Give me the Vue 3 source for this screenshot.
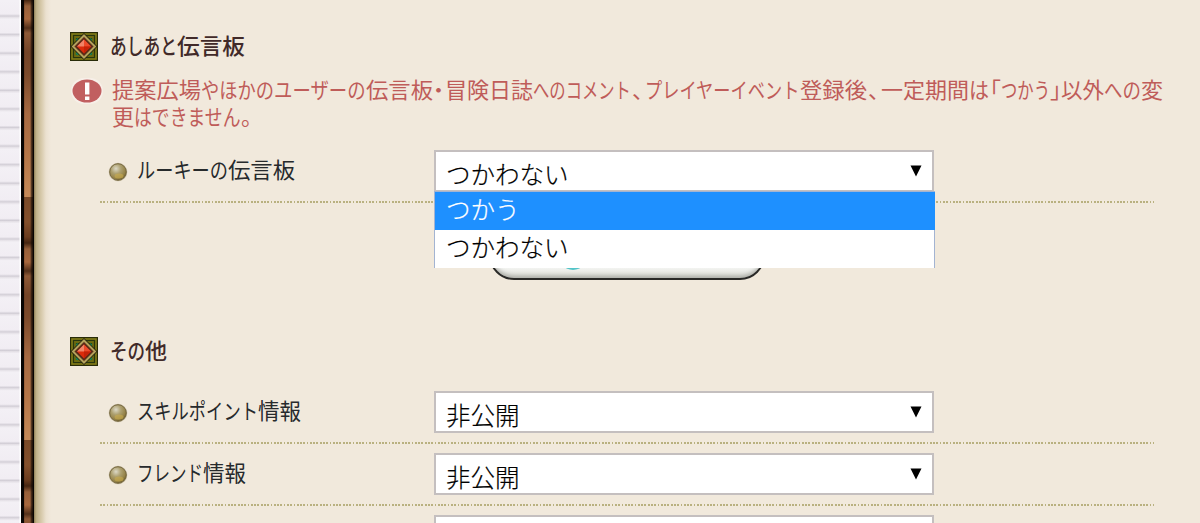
<template>
  <div class="page">
    <div class="paper"></div>
    <div class="frame"><div class="wood"></div></div>
    <main class="content">
      <section v-for="section in sections" :key="section.id" :class="['section', section.id]">
        <h2 class="heading">
          <svg class="gem" width="28" height="29" viewBox="0 0 28 29">
            <rect width="28" height="29" fill="#282b08" />
            <rect x="2" y="2" width="24" height="25" fill="#29350e" stroke="#857f18" stroke-width="1.6" />
            <path d="M5 12V5h7M16 5h7v7M23 17v7h-7M12 24H5v-7" fill="none" stroke="#6c6a10" stroke-width="1.8" />
            <g fill="#168454">
              <circle cx="7.5" cy="8" r="1.7" /><circle cx="20.5" cy="8" r="1.7" />
              <circle cx="7.5" cy="21.5" r="1.7" /><circle cx="20.5" cy="21.5" r="1.7" />
            </g>
            <path d="M14 3.5 25 14.5 14 25.5 3 14.5z" fill="#49301a" stroke="#201c0b" stroke-width="3.5" />
            <path d="M14 3.5 25 14.5 14 25.5 3 14.5z" fill="#5b2a17" stroke="#b3a25b" stroke-width="2" />
            <path d="M14 7.500 21 14.5 14 21.500 7 14.5z" fill="#db2b0b" />
            <path d="M14 7.500v7H7z" fill="#f08468" />
            <path d="M14 7.500l7 7h-7z" fill="#ed4a2a" />
            <path d="M14 21.500l7-7h-7z" fill="#c32208" />
          </svg>
          <svg class="line" width="300" height="29">
            <text v-for="run in section.title" :key="run.x" y="22" :transform="fit(run, 22)">{{ run.t }}</text>
          </svg>
        </h2>

        <div v-if="section.notice" class="notice">
          <svg class="alert" width="32" height="26" viewBox="0 0 32 26">
            <rect x="0" y="0" width="32" height="26" rx="13" fill="#f7efe8" />
            <ellipse cx="16" cy="13" rx="14.500" ry="11.500" fill="#c15f60" />
            <path d="M14 4.500h4.400v12h-4.400zM14 18.500h4.400v3.500h-4.400z" fill="#fff" />
          </svg>
          <p class="notice-text">
            <svg v-for="(line, i) in section.notice" :key="i" class="line" width="1070" height="27">
              <text v-for="run in line" :key="run.x" y="20" :transform="fit(run, 21.5)">{{ run.t }}</text>
            </svg>
          </p>
        </div>

        <div v-for="row in section.rows" :key="row.id" class="row">
          <div class="label">
            <svg class="bullet" width="20" height="20" viewBox="0 0 20 20">
              <defs>
                <radialGradient :id="'ball-' + row.id" cx="0.38" cy="0.3" r="0.75">
                  <stop offset="0" stop-color="#dcd8c6" />
                  <stop offset="0.4" stop-color="#ada070" />
                  <stop offset="0.8" stop-color="#927f43" />
                  <stop offset="1" stop-color="#5c4d25" />
                </radialGradient>
              </defs>
              <circle cx="10" cy="10" r="9.300" fill="#cfc5ad" />
              <circle cx="10" cy="10" r="8.300" :fill="`url(#ball-${row.id})`" stroke="#75673f" stroke-width="1" />
              <ellipse cx="11" cy="14" rx="4.500" ry="2.500" fill="#c9ac4c" opacity="0.6" />
            </svg>
            <svg class="line" width="280" height="30">
              <text v-for="run in row.label" :key="run.x" y="22" :transform="fit(run, 21.5)">{{ run.t }}</text>
            </svg>
          </div>
          <div class="select" @click="toggle(row)">
            <span class="value">{{ row.value }}</span>
            <svg class="arrow" width="12" height="12" viewBox="0 0 12 12"><path d="M.5.500h11L6 11.500z" /></svg>
            <ul v-if="openRow === row.id" class="menu">
              <li v-for="option in row.options" :key="option" :class="{ active: option === 'つかう' }" @click.stop="choose(row, option)">{{ option }}</li>
            </ul>
          </div>
        </div>

        <button v-if="section.id === 'board'" class="submit" type="button"><span class="submit-icon"></span></button>
      </section>
    </main>
  </div>
</template>

<script setup>
import { ref, reactive } from 'vue';

// Each run is [text, start, end]; kana is set narrower than kanji
const runs = (...list) => list.map(([t, x, end]) => ({ t, x, w: end - x }));

// Punctuation is half an em wide, everything else a full em
const fit = (run, size) => {
  const ems = [...run.t].reduce((sum, c) => sum + ('、。・「」'.includes(c) ? 0.5 : 1), 0);
  return `translate(${run.x} 0) scale(${(run.w / (ems * size)).toFixed(4)} 1)`;
};

const openRow = ref('rookie');

const sections = reactive([
  {
    id: 'board',
    title: runs(['あしあと', 0, 67], ['伝言板', 67, 135]),
    notice: [
      runs(
        ['提案広場', 0, 89], ['やほかの', 89, 162], ['ユーザーの', 162, 254], ['伝言板', 254, 321],
        ['・', 321, 332], ['冒険日誌', 333, 421], ['へのコメント', 421, 519], ['、', 520, 531],
        ['プレイヤーイベント', 533, 688], ['登録後', 688, 755], ['、', 756, 767], ['一定期間', 769, 857],
        ['は', 857, 877], ['「', 878, 889], ['つかう', 889, 938], ['」', 938, 949],
        ['以外', 949, 992], ['への', 992, 1029], ['変', 1029, 1051]
      ),
      runs(['更', 0, 22], ['はできません', 22, 129], ['。', 129, 140]),
    ],
    rows: [
      {
        id: 'rookie',
        label: runs(['ルーキーの', 0, 91], ['伝言板', 91, 158]),
        value: 'つかわない',
        options: ['つかう', 'つかわない'],
      },
    ],
  },
  {
    id: 'others',
    title: runs(['その', 0, 35], ['他', 35, 57]),
    rows: [
      { id: 'skill', label: runs(['スキルポイント', 0, 121], ['情報', 121, 164]), value: '非公開', options: ['公開', '非公開'] },
      { id: 'friend', label: runs(['フレンド', 0, 66], ['情報', 66, 109]), value: '非公開', options: ['公開', '非公開'] },
      { id: 'more', label: [], value: '', options: [] },
    ],
  },
]);

const toggle = (row) => {
  openRow.value = openRow.value === row.id ? '' : row.id;
};

const choose = (row, option) => {
  row.value = option;
  openRow.value = '';
};
</script>

<style>
body {
  margin: 0;
  overflow: hidden;
}
</style>

<style scoped>
.page {
  display: flex;
  height: 523px;
  overflow: hidden;
  background: #f1e9dc;
  font-family: "Noto Sans CJK JP", sans-serif;
}

.paper {
  width: 21px;
  background:
    linear-gradient(90deg, transparent 19px, #ffffff 20px),
    repeating-linear-gradient(180deg, #d2ced6 0, #e4e0e6 1px, #f3f0f5 3px, #f1edf3 16.5px, #d2ced6 18.58px) 0 -2.5px / 100% 600px;
}

.frame {
  width: 13px;
  background: #080503;
}

.wood {
  width: 9px;
  height: 523px;
  margin-left: 3px;
  background:
    linear-gradient(90deg, rgba(50, 20, 5, 0.3), transparent 1px, transparent 6px, rgba(15, 8, 3, 0.8) 8px),
    linear-gradient(180deg, #7a4a28 0, #84502c 25px, #6b3c1e 40px, #452511 46px, #97603a 52px, #a8683e 65px, #53301a 74px, #8f5a37 79px, #744427 98px, #7c4a2b 120px, #a76a42 160px, #b57648 200px, #c68a58 243px) 0 -46px / 100% 243px;
}

.content {
  flex: 1;
  box-sizing: border-box;
  padding: 32px 0 0 36px;
  background: linear-gradient(90deg, #8f8058 0, #bdae85 2px, #c8ba95 4px, #dacdb0 8px, #ebe1d0 12px, #f1e9dc 17px);
}

.board {
  height: 305px;
}

.heading {
  display: flex;
  margin: 0;
  height: 29px;
  gap: 12px;
}

.line {
  display: block;
  overflow: visible;
  font-size: 21.5px;
  font-feature-settings: "halt";
}

.heading .line {
  font-size: 22px;
  font-weight: 500;
  fill: #412a29;
}

.notice {
  display: flex;
  height: 63px;
  padding-top: 17px;
  gap: 9px;
}

.notice .alert {
  margin-left: 1px;
}

.notice-text {
  margin: 0;
}

.notice .line {
  fill: #bf5c59;
}

.row {
  display: flex;
  box-sizing: border-box;
  width: 1055px;
  height: 62px;
  margin-left: 30px;
  background: repeating-linear-gradient(90deg, #b9b180 0, #b9b180 1.8px, transparent 1.8px, transparent 3.28px) 0 100% / 1054px 2px no-repeat;
}

.others .heading {
  margin-bottom: 16px;
}

.label {
  display: flex;
  width: 334px;
  padding-top: 15px;
}

.bullet {
  margin: 6px 9px 0 8px;
}

.label .line {
  fill: #272a2c;
}

.select {
  position: relative;
  display: flex;
  flex-shrink: 0;
  justify-content: space-between;
  box-sizing: border-box;
  width: 500px;
  height: 42px;
  margin-top: 9px;
  padding: 0 10px;
  border: 2px solid #c4bfbf;
  background: #fff;
  color: #000;
  font-size: 24.5px;
  font-weight: 300;
  line-height: 43px;
  -webkit-text-stroke: 0.2px currentColor;
}

.arrow {
  margin-top: 13px;
}

.menu {
  position: absolute;
  z-index: 1;
  top: 39px;
  left: -2px;
  box-sizing: border-box;
  width: 501px;
  height: 77px;
  margin: 0;
  padding: 0;
  border: 1px solid #a3b4d2;
  border-bottom: 0;
  background: #fff;
  list-style: none;
}

.menu li {
  height: 38px;
  padding-left: 11px;
  line-height: 33px;
}

.menu .active {
  margin-right: -1px;
  background: #1e90ff;
  color: #fff;
}

.submit {
  display: block;
  position: relative;
  width: 276px;
  height: 56px;
  margin: 21px 0 0 419px;
  padding: 0;
  border: 2px solid #292927;
  border-radius: 25px;
  background: linear-gradient(#ffffff, #f4f5f2 80%, #d9dad4);
  box-shadow: inset 0 -2px 4px #a9aaa4;
}

.submit-icon {
  position: absolute;
  top: 14px;
  left: 67px;
  width: 30px;
  height: 30px;
  border-radius: 50%;
  background: #52c4c8;
}
</style>
